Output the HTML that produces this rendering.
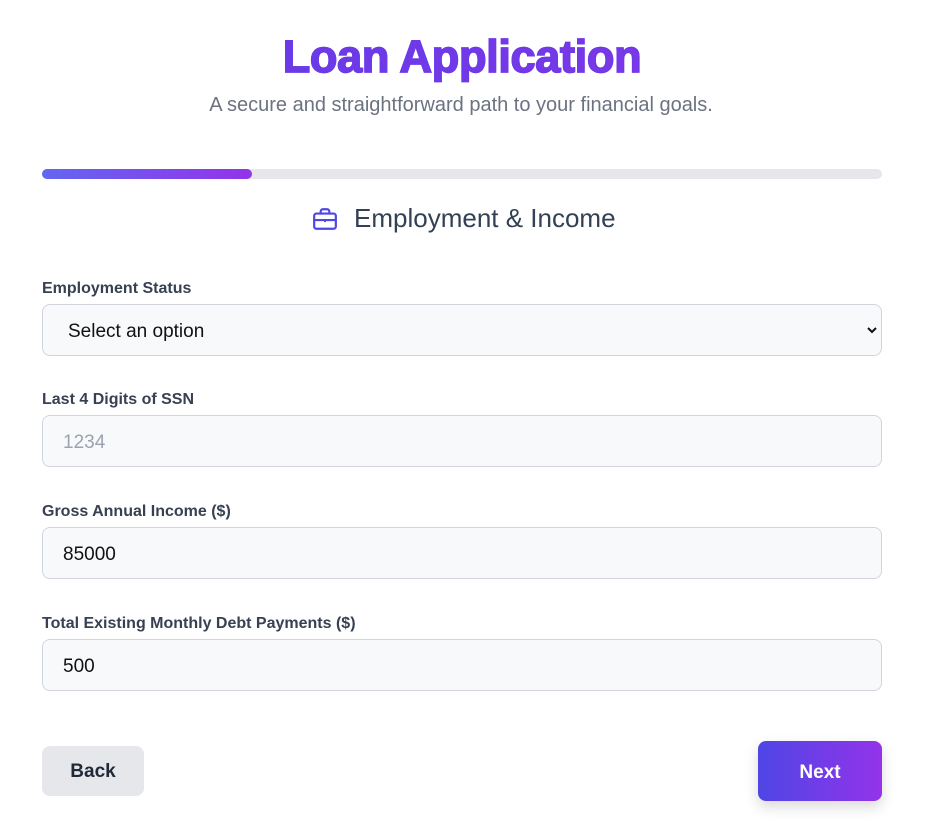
<!DOCTYPE html>
<html><head><style>
*{box-sizing:border-box;margin:0;padding:0}
body{width:938px;height:836px;background:#fff;font-family:"Liberation Sans",sans-serif;position:relative;overflow:hidden}
h1{position:absolute;top:31px;left:0;width:924px;text-align:center;font-size:45px;font-weight:900;letter-spacing:-0.3px;background:linear-gradient(90deg,#5b3ce6,#8a35e8);-webkit-background-clip:text;color:transparent;-webkit-text-stroke:1.5px #6d3ae8}
.sub{position:absolute;top:94px;left:0;width:922px;text-align:center;font-size:20px;color:#6b7280}
.bar{position:absolute;left:42px;top:169px;width:840px;height:10px;border-radius:5px;background:#e5e7eb}
.bar div{width:210px;height:10px;border-radius:5px;background:linear-gradient(90deg,#6366f1,#9333ea)}
.sec{position:absolute;top:203px;left:312px;font-size:26px;color:#334155;display:flex;align-items:center;gap:16px}
label{position:absolute;left:42px;font-size:16px;font-weight:bold;color:#374151}
.in{position:absolute;left:42px;width:840px;height:52px;border:1px solid #d1d5db;border-radius:8px;background:#f8f9fb;font-size:19px;padding-left:20px;line-height:53px;color:#111}
.btn{position:absolute;border-radius:8px;font-size:19px;font-weight:bold;text-align:center}
</style></head><body>
<h1>Loan Application</h1>
<div class="sub">A secure and straightforward path to your financial goals.</div>
<div class="bar"><div></div></div>
<div class="sec"><svg width="26" height="26" viewBox="0 0 24 24" fill="none" stroke="#4f46e5" stroke-width="2" stroke-linecap="round" stroke-linejoin="round"><rect x="2" y="7" width="20" height="14" rx="2"/><path d="M16 7V5a2 2 0 0 0-2-2h-4a2 2 0 0 0-2 2v2M2 13h20M12 13v1"/></svg>Employment &amp; Income</div>
<label style="top:280px">Employment Status</label>
<div class="in" style="top:304px;padding-left:25px">Select an option<svg style="position:absolute;right:4px;top:20px" width="10" height="10" viewBox="0 0 10 10"><path d="M1 3l4 4 4-4" fill="none" stroke="#111" stroke-width="2"/></svg></div>
<label style="top:391px">Last 4 Digits of SSN</label>
<div class="in" style="top:415px;color:#9ca3af">1234</div>
<label style="top:503px">Gross Annual Income ($)</label>
<div class="in" style="top:527px">85000</div>
<label style="top:615px">Total Existing Monthly Debt Payments ($)</label>
<div class="in" style="top:639px">500</div>
<div class="btn" style="left:42px;top:746px;width:102px;height:50px;line-height:52px;background:#e5e7eb;color:#1f2937">Back</div>
<div class="btn" style="left:758px;top:741px;width:124px;height:60px;line-height:63px;background:linear-gradient(90deg,#4f46e5,#9333ea);color:#fff;box-shadow:0 6px 14px rgba(0,0,0,.15)">Next</div>
</body></html>
